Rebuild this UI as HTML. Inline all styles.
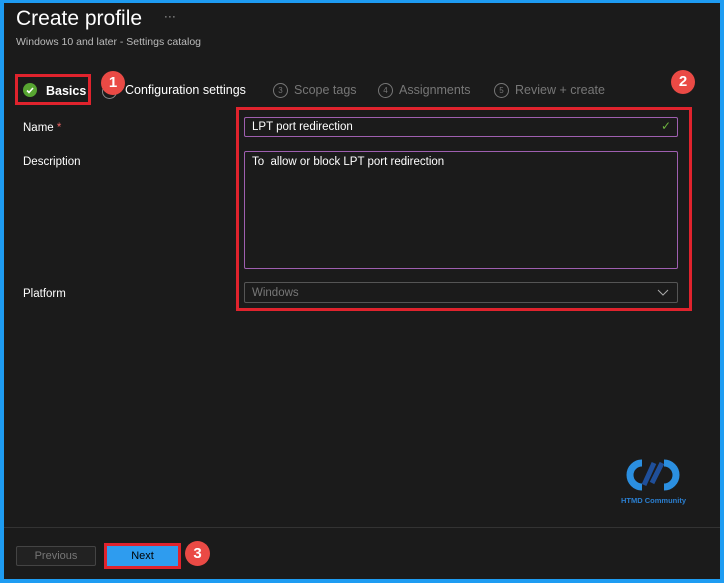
<!DOCTYPE html><html><head><style>
body{margin:0;width:724px;height:583px;background:#1e9cf2;font-family:"Liberation Sans",sans-serif;overflow:hidden;position:relative}
.p{position:absolute;left:4px;top:3px;width:716px;height:576px;background:#1b1b1b}
.a{position:absolute}
.t{color:#fff}
.red{position:absolute;border:3px solid #e0232d;box-sizing:border-box}
.c{position:absolute;border-radius:50%;background:#ea4a45;color:#fff;font-size:15px;font-weight:bold;text-align:center;box-sizing:border-box}
.in{position:absolute;border:1px solid #9f5fb0;border-radius:2px;box-sizing:border-box;color:#fff;font-size:11.5px;padding:4px 7px}
.lab{position:absolute;color:#fff;font-size:11.5px;left:23px}
.st{position:absolute;top:83px;font-size:12.5px;color:#777}
.n{display:inline-block;width:13px;height:13px;border:1px solid #777;border-radius:50%;font-size:8px;text-align:center;line-height:13px;vertical-align:1px;margin-right:6px}
</style></head><body><div class="p"></div>
<div class="a t" style="left:16px;top:7px;font-size:21px">Create profile <span style="font-size:12px;color:#aaa;margin-left:16px;vertical-align:5px">···</span></div>
<div class="a" style="left:16px;top:36px;font-size:10.5px;color:#bbb">Windows 10 and later - Settings catalog</div>
<div class="a" style="left:23px;top:83px;width:14px;height:14px;border-radius:50%;background:#57a531"></div>
<svg class="a" style="left:23px;top:83px" width="14" height="14"><path d="M4 7.5l2 2 4-4.5" stroke="#fff" stroke-width="1.6" fill="none"/></svg>
<div class="a t" style="left:46px;top:84px;font-size:12.5px;font-weight:bold">Basics</div>
<div class="a" style="left:102px;top:84px;width:13px;height:13px;border:1px solid #888;border-radius:50%"></div>
<div class="a t" style="left:125px;top:83px;font-size:12.5px">Configuration settings</div>
<div class="st" style="left:273px"><span class="n">3</span>Scope tags</div>
<div class="st" style="left:378px"><span class="n">4</span>Assignments</div>
<div class="st" style="left:494px"><span class="n">5</span>Review + create</div>
<div class="red" style="left:15px;top:74px;width:76px;height:31px"></div>
<div class="c" style="left:101px;top:71px;width:24px;height:24px;line-height:24px">1</div>
<div class="c" style="left:671px;top:70px;width:24px;height:24px;line-height:24px">2</div>
<div class="red" style="left:236px;top:107px;width:456px;height:204px"></div>
<div class="lab" style="top:122px">Name <span style="color:#e66">*</span></div>
<div class="in" style="left:244px;top:117px;width:434px;height:20px;padding-top:3px">LPT port redirection<span style="position:absolute;right:6px;top:1px;color:#6db33f;font-size:12px">✓</span></div>
<div class="lab" style="top:156px">Description</div>
<div class="in" style="left:244px;top:151px;width:434px;height:118px">To &nbsp;allow or block LPT port redirection</div>
<div class="lab" style="top:288px">Platform</div>
<div class="in" style="left:244px;top:282px;width:434px;height:21px;border-color:#555;color:#777">Windows<svg style="position:absolute;right:8px;top:6px" width="12" height="8"><path d="M1 1l5 5 5-5" stroke="#aaa" fill="none"/></svg></div>
<svg class="a" style="left:620px;top:455px" width="68" height="40"><path d="M22 8a12 12 0 1 0 0 24" stroke="#2b8fe0" stroke-width="7" fill="none"/><path d="M44 32a12 12 0 1 0 0-24" stroke="#2b8fe0" stroke-width="7" fill="none"/><path d="M24 30l10-22M32 28l10-20" stroke="#1f4f9a" stroke-width="5"/></svg>
<div class="a" style="left:621px;top:496px;font-size:7.5px;color:#2b7fd0;font-weight:bold">HTMD Community</div>
<div class="a" style="left:4px;top:527px;width:716px;height:1px;background:#333"></div>
<div class="a" style="left:16px;top:546px;width:80px;height:20px;border:1px solid #444;border-radius:2px;box-sizing:border-box;color:#777;font-size:11px;text-align:center;line-height:18px;background:#222">Previous</div>
<div class="a" style="left:107px;top:546px;width:71px;height:20px;background:#2e9cef;color:#000;font-size:11px;text-align:center;line-height:20px">Next</div>
<div class="red" style="left:104px;top:543px;width:77px;height:26px"></div>
<div class="c" style="left:185px;top:541px;width:25px;height:25px;line-height:25px">3</div>
</body></html>
